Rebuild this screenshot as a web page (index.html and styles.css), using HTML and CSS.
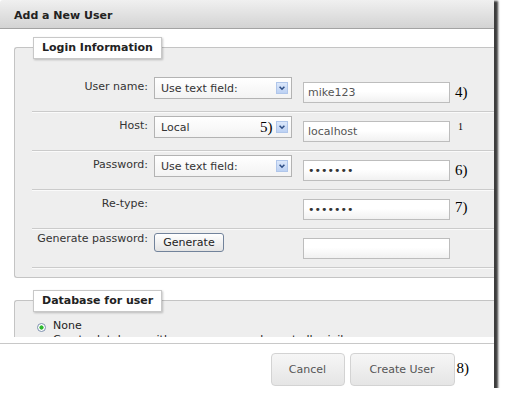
FILE: index.html
```html
<!DOCTYPE html>
<html>
<head>
<meta charset="utf-8">
<link rel="stylesheet" href="styles.css">
</head>
<body>
<div class="dialog">
  <div class="titlebar">Add a New User</div>
  <div class="content">
    <div class="group">
      <div class="legend">Login Information</div>
      <div class="rows">
        <div class="row">
          <label class="lbl">User name:</label>
          <span class="select"><select><option>Use text field:</option></select><span class="arrow"><svg width="10" height="10" viewBox="0 0 10 10"><path d="M2.6 3.8 L5 6.2 L7.4 3.8" fill="none" stroke="#2f4f86" stroke-width="1.6"/></svg></span></span>
          <input class="text" type="text" value="mike123">
          <span class="note">4)</span>
        </div>
        <div class="row">
          <label class="lbl">Host:</label>
          <span class="select"><select><option>Local</option></select><span class="note note5">5)</span><span class="arrow"><svg width="10" height="10" viewBox="0 0 10 10"><path d="M2.6 3.8 L5 6.2 L7.4 3.8" fill="none" stroke="#2f4f86" stroke-width="1.6"/></svg></span></span>
          <input class="text" type="text" value="localhost">
          <span class="sup">1</span>
        </div>
        <div class="row">
          <label class="lbl">Password:</label>
          <span class="select"><select><option>Use text field:</option></select><span class="arrow"><svg width="10" height="10" viewBox="0 0 10 10"><path d="M2.6 3.8 L5 6.2 L7.4 3.8" fill="none" stroke="#2f4f86" stroke-width="1.6"/></svg></span></span>
          <input class="text pass" type="password" value="mike123">
          <span class="note">6)</span>
        </div>
        <div class="row">
          <label class="lbl">Re-type:</label>
          <input class="text pass col3" type="password" value="mike123">
          <span class="note note7">7)</span>
        </div>
        <div class="row">
          <label class="lbl lbl-gen">Generate password:</label>
          <button class="btn-gen" type="button">Generate</button>
          <input class="text" type="text" value="">
        </div>
      </div>
    </div>
    <div class="group group-db">
      <div class="legend">Database for user</div>
      <div class="radio-row"><span class="radio"></span><span>None</span></div>
      <div class="sub">Create database with same name and grant all privileges</div>
    </div>
  </div>
  <div class="footer">
    <button class="fbtn cancel" type="button">Cancel</button>
    <button class="fbtn create" type="button">Create User</button>
    <span class="note note8">8)</span>
  </div>
</div>
</body>
</html>
```

FILE: styles.css
```css
body {
  margin: 0;
  background: #fff;
  font-family: "DejaVu Sans", sans-serif;
  font-size: 11px;
  color: #333;
}

.dialog {
  width: 494px;
  height: 388px;
  background: #fff;
  display: flex;
  flex-direction: column;
  box-shadow: 2px 3px 2px 2px rgba(40, 40, 40, 0.9);
}

.titlebar {
  height: 24px;
  padding: 4px 0 0 14px;
  line-height: 24px;
  font-weight: bold;
  color: #222;
  background: linear-gradient(#f0f0f0, #d3d3d3);
  border-bottom: 1px solid #a3a3a3;
  border-radius: 3px 0 0 0;
}

.content {
  height: 308px;
  overflow: hidden;
  padding-left: 14px;
  flex: none;
}

.group {
  margin-top: 18px;
  border: 1px solid #c4c4c4;
  border-right: 0;
  border-radius: 3px 0 0 3px;
  background: #eeeeee;
  padding-bottom: 9px;
}

.legend {
  width: fit-content;
  height: 20px;
  line-height: 20px;
  margin: -11px 0 0 18px;
  padding: 0 8px 0 8px;
  background: #fff;
  border: 1px solid #c8c8c8;
  box-shadow: 1px 1px 2px rgba(0, 0, 0, 0.22);
  font-weight: bold;
  color: #222;
}

.rows {
  margin: 14px 0 0 17px;
}

.row {
  display: grid;
  grid-template-columns: 122px 149px 152px auto;
  align-items: start;
  height: 38px;
  border-bottom: 1px solid #cbcbcb;
  box-shadow: 0 1px 0 #fafafa;
}

.lbl {
  padding-right: 6px;
  text-align: right;
  line-height: 14px;
  margin-top: 7px;
  color: #333;
}

.lbl-gen {
  margin-top: 3px;
}

.select {
  position: relative;
  margin-top: 4px;
  width: 138px;
  height: 22px;
}

.select select {
  appearance: none;
  -webkit-appearance: none;
  display: block;
  width: 100%;
  height: 100%;
  margin: 0;
  padding: 0 0 0 6px;
  border: 1px solid #b3b3b3;
  border-radius: 0;
  background: linear-gradient(#ffffff, #f3f3f3);
  font: inherit;
  color: #333;
}

.arrow {
  position: absolute;
  right: 4px;
  top: 5px;
  width: 10px;
  height: 10px;
  border: 1px solid #b0c6ea;
  background: linear-gradient(#dce8fb, #bcd1f3);
  display: flex;
}

.text {
  grid-column: 3;
  margin: 9px 0 0 0;
  width: 147px;
  height: 21px;
  box-sizing: border-box;
  border: 1px solid #bdbdbd;
  border-radius: 0;
  padding: 0 4px;
  font: inherit;
  color: #555;
  background: linear-gradient(#ffffff 45%, #f1f1f1);
  outline: none;
}

.pass {
  color: #333;
}

.note {
  font-family: "Liberation Serif", serif;
  font-size: 15px;
  line-height: 15px;
  margin-top: 12px;
  color: #000;
}

.note7 {
  margin-top: 10px;
}

.note5 {
  position: absolute;
  left: 106px;
  top: 4px;
  margin: 0;
}

.sup {
  font-family: "Liberation Serif", serif;
  font-size: 10px;
  line-height: 10px;
  margin: 10px 0 0 3px;
  color: #000;
}

.btn-gen {
  margin-top: 4px;
  width: 70px;
  height: 19px;
  padding: 0;
  font: inherit;
  color: #222;
  border: 1px solid #72839b;
  border-radius: 3px;
  background: linear-gradient(#ffffff, #e4e4e4);
}

.group-db {
  margin-top: 22px;
  height: 120px;
}

.radio-row {
  display: flex;
  align-items: flex-start;
  margin: 7px 0 0 22px;
  line-height: 14px;
  color: #222;
}

.radio {
  width: 7px;
  height: 7px;
  margin: 4px 7px 0 0;
  border: 1px solid #7d90ae;
  border-radius: 50%;
  background: radial-gradient(circle, #2fb82f 0 1.8px, #ffffff 2.4px);
}

.sub {
  margin-left: 38px;
  line-height: 14px;
  color: #222;
}

.footer {
  flex: 1;
  margin-top: 6px;
  border-top: 1px solid #c8c8c8;
  display: flex;
  justify-content: flex-end;
  align-items: flex-start;
  padding: 9px 25px 0 0;
}

.fbtn {
  height: 33px;
  padding: 0;
  border: 1px solid #d3d3d3;
  border-radius: 4px;
  background: linear-gradient(#f6f6f6, #e5e5e5);
  font: inherit;
  color: #555;
}

.cancel {
  width: 74px;
  margin-right: 5px;
}

.create {
  width: 105px;
}

.note8 {
  margin: 8px 0 0 2px;
}
```
